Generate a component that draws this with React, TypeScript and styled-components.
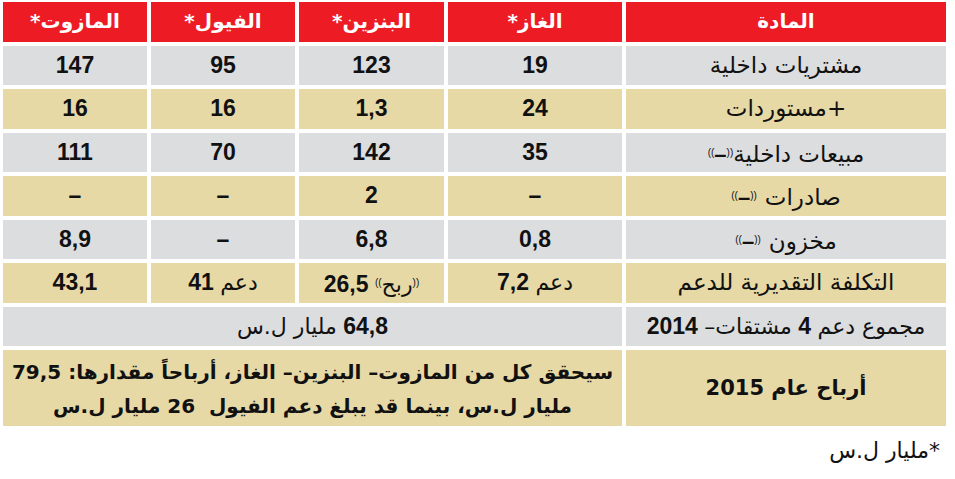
import styled, { createGlobalStyle } from "styled-components";
import type { ReactNode } from "react";

/*-----------------------------------------------------------------------------------*/

const GlobalStyle = createGlobalStyle`
  html, body {
    margin: 0;
    padding: 0;
    background: #ffffff;
  }
`;

type Tone = "head" | "grey" | "sand";

const tones: Record<Tone, string> = {
  head: "#ed1c24",
  grey: "#dcdddf",
  sand: "#e7d9a6",
};

const ROW = 39.5;

const Page = styled.div`
  width: 955px;
  padding: 2px 0 0 3px;
  box-sizing: border-box;
  font-family: "Liberation Sans Narrow", "Liberation Sans", "DejaVu Sans", sans-serif;
  color: #111111;
`;

const Grid = styled.div`
  display: grid;
  grid-template-columns: 320px 174px 145px 144px 144px;
  grid-template-rows: repeat(8, ${ROW}px) 76px;
  column-gap: 4px;
  row-gap: 4px;
  width: 943px;
`;

const Cell = styled.div<{ $tone: Tone; $span?: number }>`
  background: ${({ $tone }) => tones[$tone]};
  grid-column: ${({ $span }) => ($span ? `span ${$span}` : "auto")};
  text-align: center;
  line-height: ${ROW}px;
  white-space: nowrap;
  overflow: hidden;
`;

const HeadCell = styled(Cell)`
  color: #ffffff;
  font-weight: bold;
  font-size: 20px;
  font-family: "DejaVu Sans", sans-serif;
`;

const LabelCell = styled(Cell)`
  font-family: "DejaVu Sans", sans-serif;
  font-size: 23px;
`;

const ValueCell = styled(Cell)`
  font-size: 23px;
  font-weight: bold;
`;

const BlockCell = styled(Cell)`
  display: flex;
  align-items: center;
  justify-content: center;
  line-height: normal;
`;

/* visual left-to-right pairing of the (–) mark and its word */
const Labeled = styled.span<{ $gap: number }>`
  display: inline-flex;
  direction: ltr;
  align-items: baseline;
  gap: ${({ $gap }) => $gap}px;
`;

const Word = styled.span`
  font-family: "DejaVu Sans", sans-serif;
  font-weight: normal;
  font-size: 22px;
`;

const Strong = styled.span`
  font-family: "Liberation Sans Narrow", "DejaVu Sans", sans-serif;
  font-weight: bold;
  font-size: 21px;
`;

const Note = styled.div`
  font-family: "DejaVu Sans", sans-serif;
  font-weight: bold;
  font-size: 20px;
  line-height: 34px;
  text-align: center;
  padding-top: 2px;
`;

const Quote = styled.span`
  font-size: 10px;
  vertical-align: 6px;
  font-weight: normal;
`;

const MinusMark = styled.span`
  font-family: "Liberation Sans", sans-serif;
  font-weight: bold;
  font-size: 22px;
`;

const Footnote = styled.div`
  font-family: "DejaVu Sans", sans-serif;
  font-size: 22px;
  text-align: right;
  padding: 12px 15px 0 0;
`;

/*-----------------------------------------------------------------------------------*/

const Open = () => <Quote>((</Quote>;
const Close = () => <Quote>))</Quote>;

const Minus = ({ children, gap = 0 }: { children: ReactNode; gap?: number }) => (
  <Labeled $gap={gap}>
    <MinusMark>
      <Open />–<Close />
    </MinusMark>
    <span dir="rtl">{children}</span>
  </Labeled>
);

const heads = ["المادة", "الغاز*", "البنزين*", "الفيول*", "المازوت*"];

const rows: { tone: Tone; label: ReactNode; values: ReactNode[] }[] = [
  { tone: "grey", label: "مشتريات داخلية", values: ["19", "123", "95", "147"] },
  { tone: "sand", label: "+مستوردات", values: ["24", "1,3", "16", "16"] },
  {
    tone: "grey",
    label: <Minus>مبيعات داخلية</Minus>,
    values: ["35", "142", "70", "111"],
  },
  {
    tone: "sand",
    label: <Minus gap={8}>صادرات</Minus>,
    values: ["–", "2", "–", "–"],
  },
  {
    tone: "grey",
    label: <Minus gap={8}>مخزون</Minus>,
    values: ["0,8", "6,8", "–", "8,9"],
  },
  {
    tone: "sand",
    label: "التكلفة التقديرية للدعم",
    values: [
      <>
        <Word>دعم</Word> 7,2
      </>,
      <span dir="ltr">
        26,5 <Open />
        <Word>ربح</Word>
        <Close />
      </span>,
      <>
        <Word>دعم</Word> 41
      </>,
      "43,1",
    ],
  },
];

const App = () => (
  <>
    <GlobalStyle />
    <Page>
      <Grid dir="rtl">
        {heads.map((h) => (
          <HeadCell key={h} $tone="head">
            {h}
          </HeadCell>
        ))}

        {rows.map((r, i) => [
          <LabelCell key={`l${i}`} $tone={r.tone}>
            {r.label}
          </LabelCell>,
          ...r.values.map((v, j) => (
            <ValueCell key={`v${i}-${j}`} $tone={r.tone}>
              {v}
            </ValueCell>
          )),
        ])}

        <ValueCell $tone="grey">
          <Word>مجموع دعم</Word> 4 <Word>مشتقات–</Word> 2014
        </ValueCell>
        <ValueCell $tone="grey" $span={4}>
          64,8 <Word>مليار ل.س</Word>
        </ValueCell>

        <BlockCell $tone="sand">
          <Strong>أرباح عام 2015</Strong>
        </BlockCell>
        <BlockCell $tone="sand" $span={4}>
          <Note>
            سيحقق كل من المازوت– البنزين– الغاز، أرباحاً مقدارها: 79,5
            <br />
            مليار ل.س، بينما قد يبلغ دعم الفيول&nbsp; 26 مليار ل.س
          </Note>
        </BlockCell>
      </Grid>
      <Footnote dir="rtl">*مليار ل.س</Footnote>
    </Page>
  </>
);

export default App;
